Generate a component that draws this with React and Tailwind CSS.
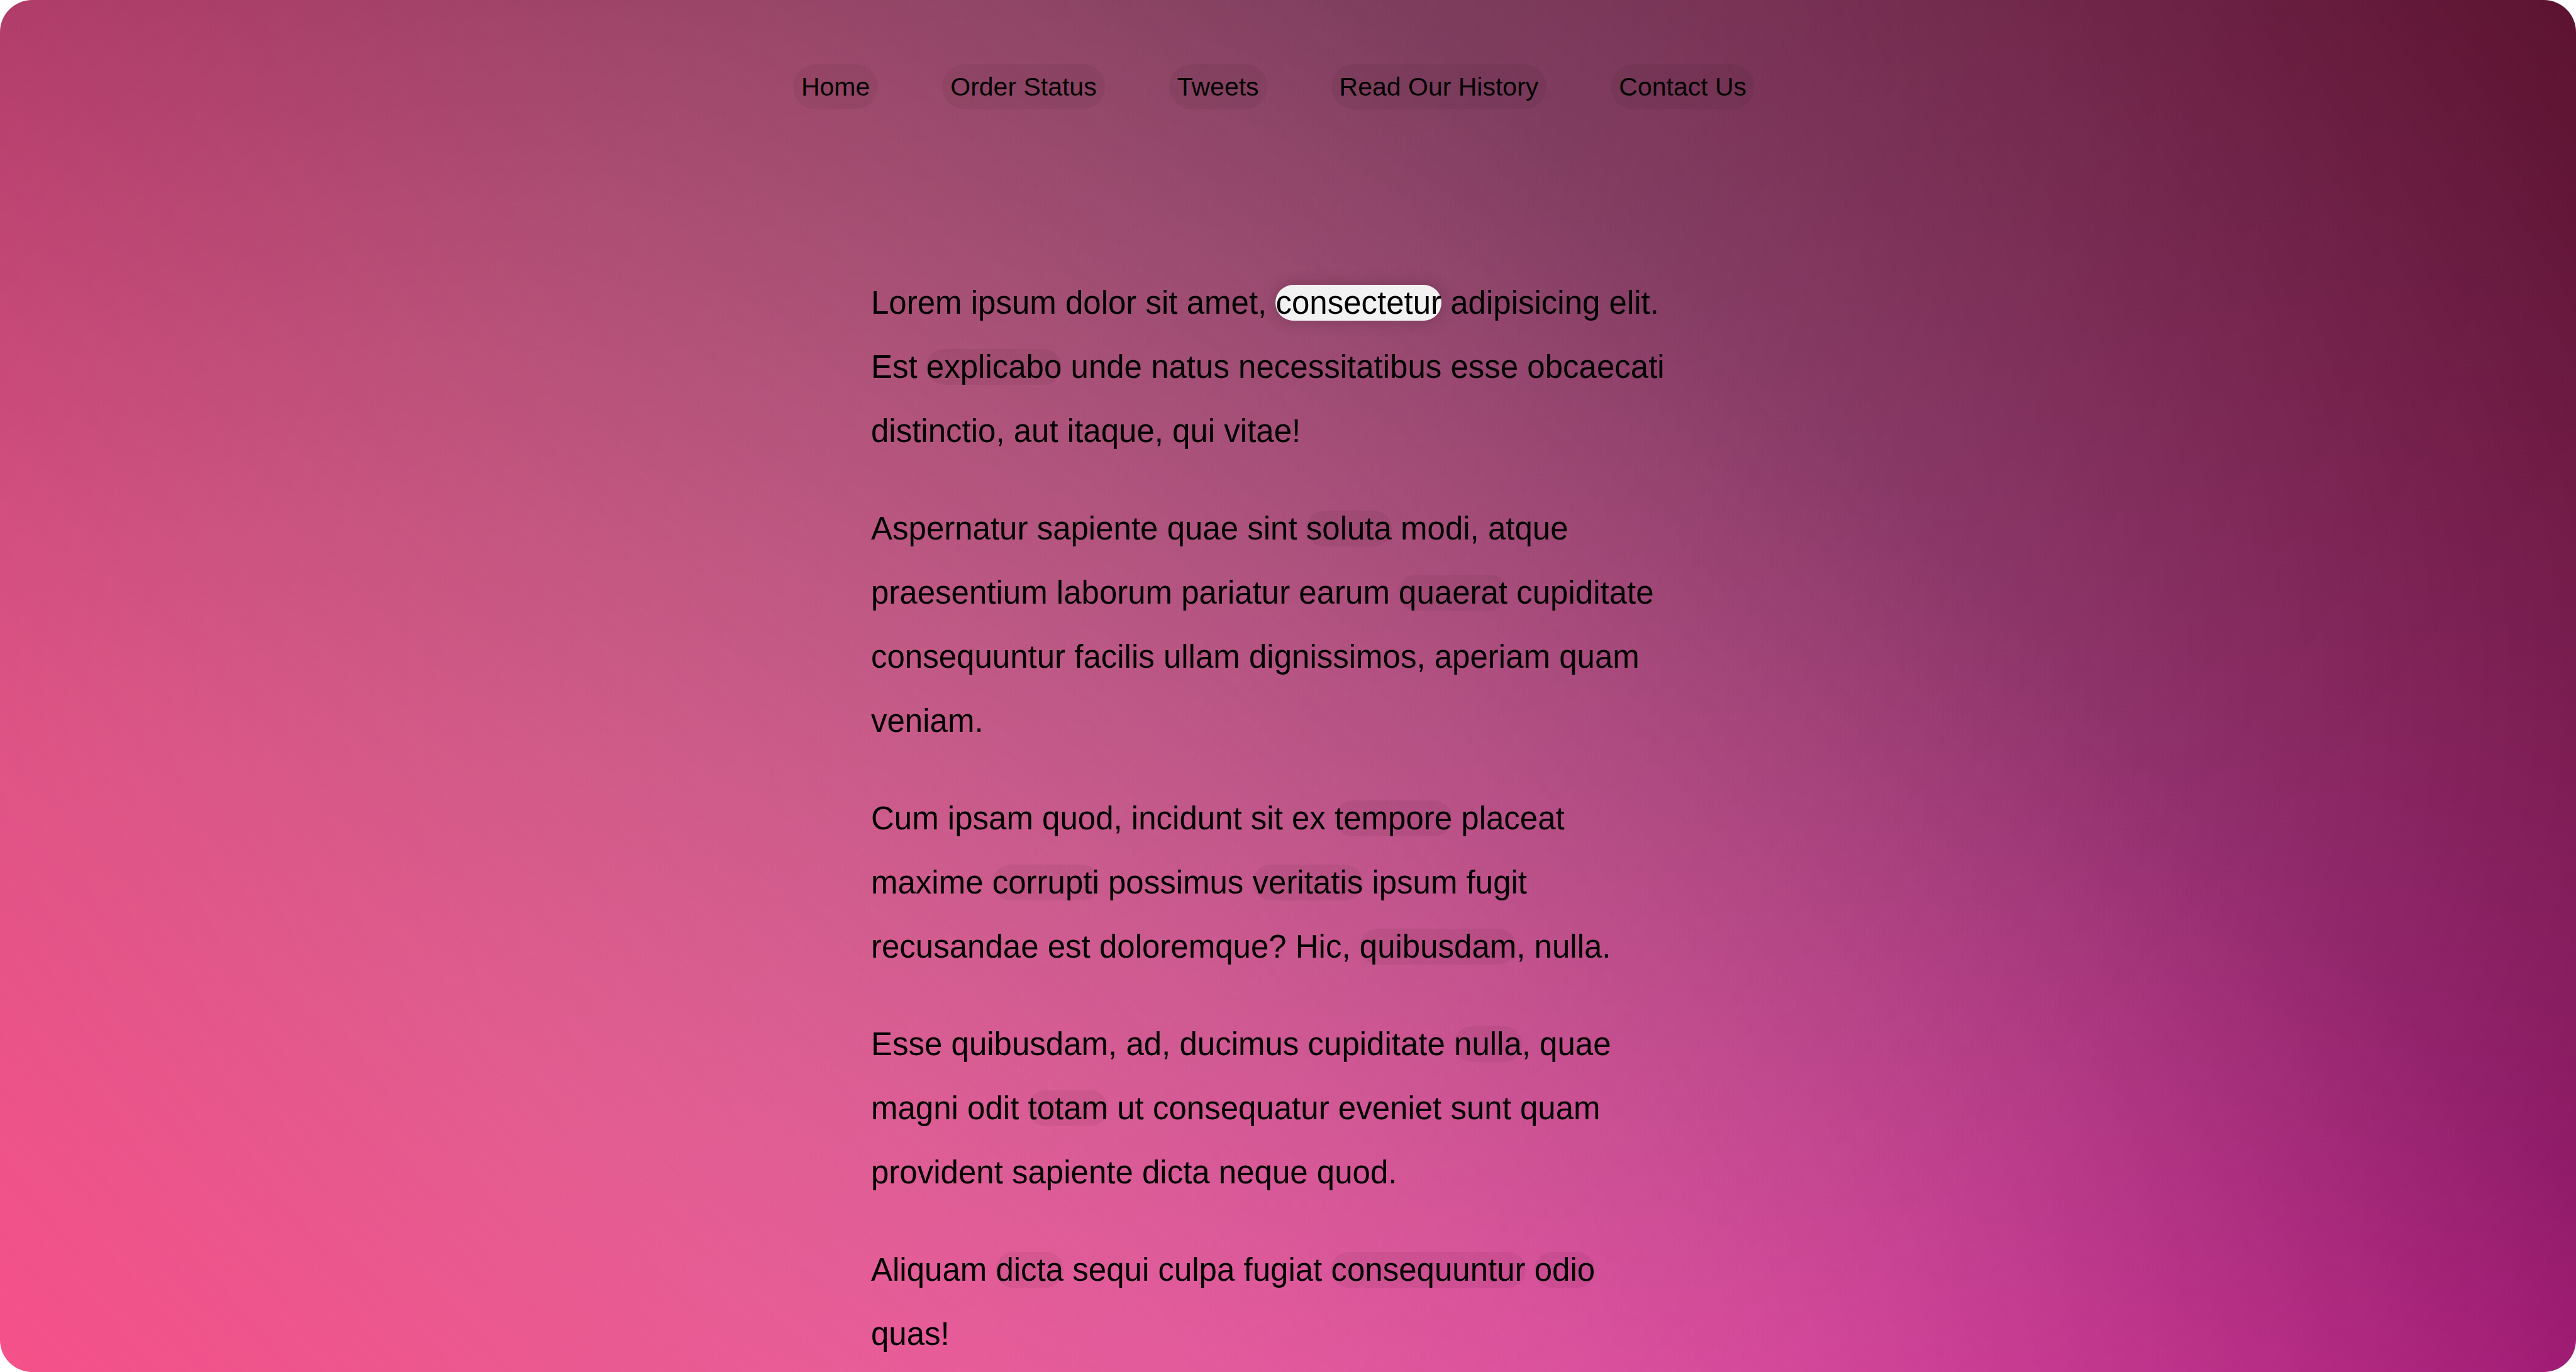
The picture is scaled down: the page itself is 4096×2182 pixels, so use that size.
const menu = ["Home", "Order Status", "Tweets", "Read Our History", "Contact Us"];

function Word({ children, active = false }) {
  return (
    <a
      href="#"
      className={
        active
          ? "rounded-[51px] bg-[#f2f2f2] text-black shadow-[0_0_26px_rgba(0,0,0,0.2)]"
          : "rounded-[51px] bg-black/5 text-black"
      }
    >
      {children}
    </a>
  );
}

export default function App() {
  return (
    <div className="min-h-screen bg-white">
      <div className="min-h-screen rounded-[51px] bg-[linear-gradient(45deg,rgba(245,80,137,1)_0%,rgba(245,80,137,0)_70%),linear-gradient(135deg,rgba(107,40,73,1)_0%,rgba(107,40,73,0)_80%),linear-gradient(225deg,rgba(88,13,42,1)_0%,rgba(88,13,42,0)_80%),linear-gradient(315deg,rgba(239,38,208,1)_0%,rgba(239,38,208,0)_80%)] pr-[45px] font-['Liberation_Sans',Arial,sans-serif] text-black">
        <nav className="pt-[102px] pb-[257px]">
          <ul className="flex justify-center gap-[102px]">
            {menu.map((label) => (
              <li key={label} className="flex">
                <a
                  href="#"
                  className="rounded-[51px] bg-black/5 p-[13px] text-[41px] leading-[46px] whitespace-nowrap"
                >
                  {label}
                </a>
              </li>
            ))}
          </ul>
        </nav>
        <main className="mx-auto flex max-w-[1281px] flex-col gap-[53px] text-[51px] leading-[102px]">
          <p>
            Lorem ipsum dolor sit amet, <Word active>consectetur</Word> adipisicing elit. Est{" "}
            <Word>explicabo</Word> unde natus necessitatibus esse obcaecati distinctio, aut itaque, qui
            vitae!
          </p>
          <p>
            Aspernatur sapiente quae sint <Word>soluta</Word> modi, atque praesentium laborum pariatur
            earum <Word>quaerat</Word> cupiditate consequuntur facilis ullam dignissimos, aperiam quam
            veniam.
          </p>
          <p>
            Cum ipsam quod, incidunt sit ex <Word>tempore</Word> placeat maxime <Word>corrupti</Word>{" "}
            possimus <Word>veritatis</Word> ipsum fugit recusandae est doloremque? Hic,{" "}
            <Word>quibusdam</Word>, nulla.
          </p>
          <p>
            Esse quibusdam, ad, ducimus cupiditate <Word>nulla</Word>, quae magni odit{" "}
            <Word>totam</Word> ut consequatur eveniet sunt quam provident sapiente dicta neque quod.
          </p>
          <p>
            Aliquam <Word>dicta</Word> sequi culpa fugiat <Word>consequuntur</Word> <Word>odio</Word>{" "}
            quas!
          </p>
        </main>
      </div>
    </div>
  );
}
